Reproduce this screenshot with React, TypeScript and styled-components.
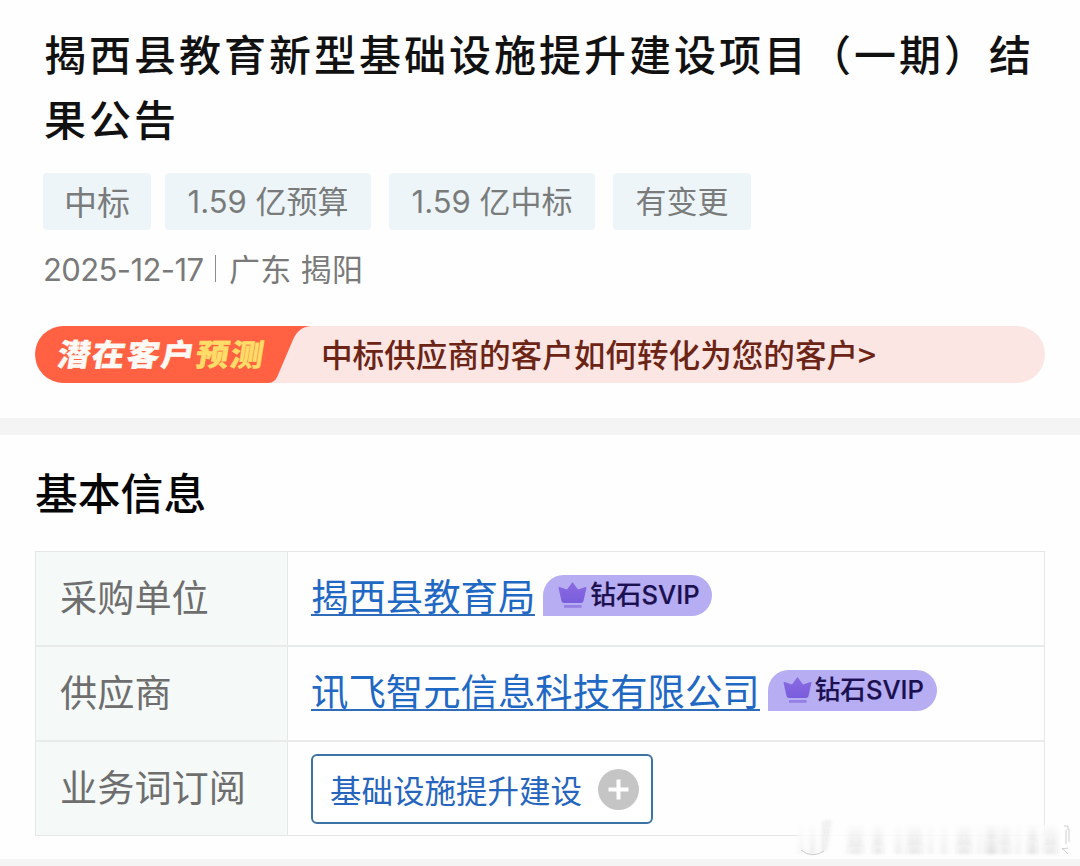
import React from "react";
import styled, { createGlobalStyle } from "styled-components";

const GlobalStyle = createGlobalStyle`
  * {
    box-sizing: border-box;
  }
  body {
    margin: 0;
    background: #fff;
    font-family: Inter, "Noto Sans CJK SC", sans-serif;
  }
`;

const Page = styled.div`
  position: relative;
  width: 1080px;
  height: 866px;
  overflow: hidden;
  background: #fefefe;
`;

const Header = styled.header`
  height: 418px;
  padding: 20px 35px 0;
`;

const Title = styled.h1`
  margin: 0;
  padding-left: 9px;
  font-family: "Noto Sans CJK SC", sans-serif;
  font-size: 42px;
  font-weight: 500;
  line-height: 65px;
  letter-spacing: 3px;
  white-space: nowrap;
  color: #111;
`;

const Tags = styled.div`
  display: flex;
  margin: 23px 0 0 8px;
`;

const Tag = styled.span<{ width: number; gap?: number; size?: number; line?: number }>`
  flex: none;
  width: ${(props) => props.width}px;
  height: 57px;
  margin-right: ${(props) => props.gap ?? 18}px;
  border-radius: 4px;
  background: #edf5f8;
  color: #7a7c7c;
  font-size: ${(props) => props.size ?? 31}px;
  line-height: ${(props) => props.line ?? 58}px;
  text-align: center;
  white-space: nowrap;
`;

const Meta = styled.div`
  display: flex;
  align-items: center;
  height: 40px;
  margin: 20px 0 0 8px;
  font-size: 31px;
  line-height: 40px;
  white-space: nowrap;
  color: #7a7a7a;
`;

const DateText = styled.span`
  width: 172px;
  letter-spacing: -0.6px;
`;

const MetaLine = styled.i`
  width: 1px;
  height: 27px;
  margin: -4px 13px 0 0;
  background: #8c8c8c;
`;

const Place = styled.span`
  letter-spacing: 0.3px;
`;

const Banner = styled.a`
  display: flex;
  width: 1010px;
  height: 57px;
  margin-top: 36px;
  border-radius: 28.5px;
  background: #fce6e3;
  overflow: hidden;
`;

const BannerLabel = styled.div`
  position: relative;
  width: 286px;
  height: 57px;
`;

const LabelShape = styled.svg`
  position: absolute;
  left: 0;
  top: 0;
`;

const LabelText = styled.span`
  position: relative;
  display: block;
  padding-left: 23px;
  font-family: "Noto Sans CJK SC", sans-serif;
  font-size: 33px;
  font-weight: 900;
  line-height: 55px;
  letter-spacing: 1.6px;
  white-space: nowrap;
  color: #fffaf5;
  -webkit-text-stroke: 0.3px currentColor;
  transform: skewX(-9deg) scaleY(0.93);

  em {
    font-style: normal;
    color: #ffdc68;
  }
`;

const BannerText = styled.span`
  font-family: "Noto Sans CJK SC", sans-serif;
  font-size: 31.6px;
  font-weight: 500;
  line-height: 54px;
  white-space: nowrap;
  color: #6b2415;
`;

const Divider = styled.div<{ height: number }>`
  height: ${(props) => props.height}px;
  background: #f4f4f4;
`;

const Section = styled.section`
  height: 424px;
  padding: 25px 35px 0;
`;

const SectionTitle = styled.h2`
  height: 67px;
  margin: 0 0 24px;
  font-family: "Noto Sans CJK SC", sans-serif;
  font-size: 42.8px;
  font-weight: 500;
  line-height: 62px;
  color: #050505;
`;

const Table = styled.div`
  width: 1010px;
  border: 1px solid #e6e8e8;
`;

const Row = styled.div`
  display: flex;
  height: 95px;
  border-bottom: 2px solid #e9ebeb;

  &:last-child {
    height: 93px;
    border-bottom: 0;
  }
`;

const Label = styled.div`
  width: 252px;
  padding-left: 24px;
  border-right: 1px solid #e6e8e8;
  background: #f5f9f8;
  font-size: 37.2px;
  line-height: 93px;
  color: #6e6e6e;
`;

const Value = styled.div`
  display: flex;
  align-items: center;
  padding-left: 23px;
`;

const Company = styled.a`
  height: 41px;
  margin-top: -6px;
  border-bottom: 2px solid #2e6bb8;
  font-family: "Noto Sans CJK SC", sans-serif;
  font-size: 37.4px;
  line-height: 41px;
  white-space: nowrap;
  color: #1f68c4;
`;

const Badge = styled.span`
  display: flex;
  align-items: center;
  width: 169px;
  height: 41px;
  margin: -6px 0 0 8px;
  padding-left: 15px;
  border-radius: 20.5px 20.5px 20.5px 0;
  background: #b7adf3;
  font-size: 25.6px;
  font-weight: 500;
  line-height: 36px;
  white-space: nowrap;
  color: #1b1050;
  -webkit-text-stroke: 0.2px currentColor;

  svg {
    flex: none;
    margin: 0 3px 0 0;
  }

  span {
    margin-top: -2px;
  }
`;

const Keyword = styled.button`
  display: flex;
  align-items: center;
  justify-content: space-between;
  width: 342px;
  height: 70px;
  margin-top: 1px;
  padding: 0 12px 0 17px;
  border: 2px solid #3d72a4;
  border-radius: 6px;
  background: #fff;
  font-family: "Noto Sans CJK SC", sans-serif;
  font-size: 31.5px;
  white-space: nowrap;
  color: #2665bd;
`;

const Smudge = styled.svg`
  position: absolute;
  left: 790px;
  top: 812px;
`;

const Crown = () => (
  <svg width="29" height="29" viewBox="0 0 29 29">
    <defs>
      <linearGradient id="crown" x1="0" y1="0" x2="0" y2="1">
        <stop offset="0" stopColor="#8b6be2" />
        <stop offset="1" stopColor="#7a5ddd" />
      </linearGradient>
    </defs>
    <path
      fill="url(#crown)"
      d="M14.500 1 20 8.500 27.500 6q1.200-.2.900 1L25.500 20q-.6 2-2.500 2H6q-1.900 0-2.500-2L.6 7q-.3-1.200.9-1L9 8.500Z"
    />
    <rect x="6" y="24" width="17.500" height="2.800" fill="#947fe3" />
  </svg>
);

// x, width, opacity
const bars = [
  [8, 6, 0.04], [21, 3, 0.13], [58, 15, 0.09], [83, 10, 0.1], [105, 7, 0.06],
  [117, 15, 0.1], [138, 5, 0.06], [151, 6, 0.06], [167, 14, 0.1], [187, 5, 0.05],
  [196, 11, 0.14], [210, 10, 0.1], [225, 6, 0.05], [238, 9, 0.13], [254, 13, 0.1],
];

const FadedMark = () => (
  <Smudge width="290" height="50" viewBox="0 0 290 50">
    <defs>
      <linearGradient id="fade" x1="0" y1="0" x2="0" y2="1">
        <stop offset="0" stopColor="#333" stopOpacity="0.05" />
        <stop offset="1" stopColor="#333" />
      </linearGradient>
      <filter id="soft" x="-10%" y="-20%" width="120%" height="140%">
        <feGaussianBlur stdDeviation="2.500 0.900" />
      </filter>
      <filter id="edge" x="-10%" y="-30%" width="120%" height="160%">
        <feGaussianBlur stdDeviation="2 1" />
      </filter>
    </defs>
    <rect x="9" y="13" width="262" height="29" fill="#fefefe" opacity="0.9" filter="url(#edge)" />
    <g filter="url(#soft)">
      {bars.map(([x, width, opacity]) => (
        <rect key={x} x={x} y="12" width={width} height="30" fill="url(#fade)" opacity={opacity} />
      ))}
      <path d="m34 9 6-1-4 30-4 3Z" fill="#333" opacity="0.1" />
    </g>
    <path d="M11 38q11 9 23 1" fill="none" stroke="#aaa" opacity="0.6" />
    <path d="M274 14h4v4m-2 0v14m3-15v13M272 36l6 6m0-6-6 1" fill="none" stroke="#bbb" opacity="0.7" />
  </Smudge>
);

const SvipBadge = () => (
  <Badge>
    <Crown />
    <span>钻石SVIP</span>
  </Badge>
);

const App = () => {
  return (
    <Page>
      <GlobalStyle />
      <Header>
        <Title>
          揭西县教育新型基础设施提升建设项目（一期）结
          <br />
          果公告
        </Title>
        <Tags>
          <Tag width={108} gap={14} size={33} line={61}>中标</Tag>
          <Tag width={206}>1.59 亿预算</Tag>
          <Tag width={206}>1.59 亿中标</Tag>
          <Tag width={138}>有变更</Tag>
        </Tags>
        <Meta>
          <DateText>2025-12-17</DateText>
          <MetaLine />
          <Place>广东 揭阳</Place>
        </Meta>
        <Banner>
          <BannerLabel>
            <LabelShape width="280" height="57" viewBox="0 0 280 57">
              <path
                d="M26 0H276C266 1 261 6 257 16L243 49Q240 57 233 57H26C10 57 0 45 0 28.500S10 0 26 0Z"
                fill="#ff6142"
              />
            </LabelShape>
            <LabelText>
              潜在客户<em>预测</em>
            </LabelText>
          </BannerLabel>
          <BannerText>中标供应商的客户如何转化为您的客户&gt;</BannerText>
        </Banner>
      </Header>
      <Divider height={17} />
      <Section>
        <SectionTitle>基本信息</SectionTitle>
        <Table>
          <Row>
            <Label>采购单位</Label>
            <Value>
              <Company>揭西县教育局</Company>
              <SvipBadge />
            </Value>
          </Row>
          <Row>
            <Label>供应商</Label>
            <Value>
              <Company>讯飞智元信息科技有限公司</Company>
              <SvipBadge />
            </Value>
          </Row>
          <Row>
            <Label>业务词订阅</Label>
            <Value>
              <Keyword>
                <span>基础设施提升建设</span>
                <svg width="41" height="41" viewBox="0 0 41 41">
                  <circle cx="20.500" cy="20.500" r="20.500" fill="#c5c5c5" />
                  <path d="M20.500 10.500v20M10.500 20.500h20" stroke="#fff" strokeWidth="4" />
                </svg>
              </Keyword>
            </Value>
          </Row>
        </Table>
      </Section>
      <Divider height={7} />
      <FadedMark />
    </Page>
  );
};

export default App;
